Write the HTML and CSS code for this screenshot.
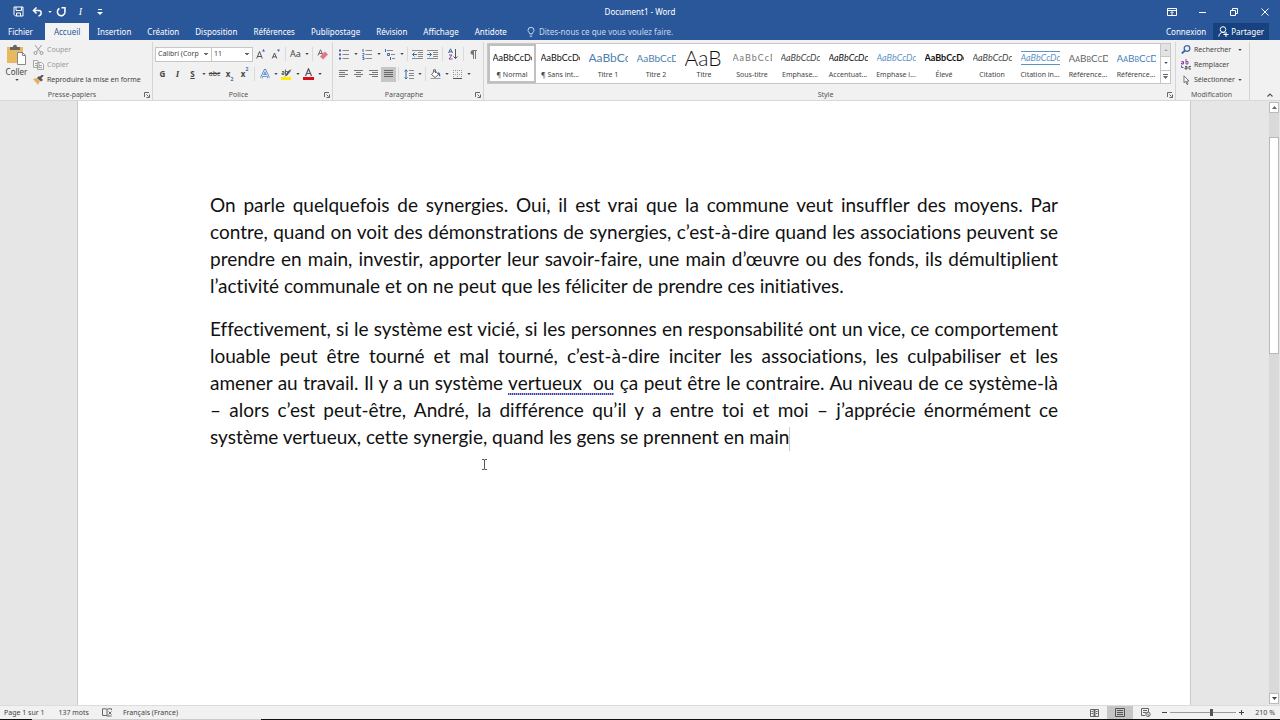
FILE: index.html
```html
<!DOCTYPE html>
<html lang="fr">
<head>
<meta charset="utf-8">
<title>Document1 - Word</title>
<link rel="stylesheet" href="styles.css">
</head>
<body>
<svg class="defs" aria-hidden="true">
  <symbol id="caret" viewBox="0 0 5 3"><path d="M0 0h5L2.500 3z" fill="currentColor"/></symbol>
  <symbol id="launch" viewBox="0 0 6 6"><path d="M.5 5V.5H5M2.500 2.500l2 2M5.500 2.500v3h-3" fill="none" stroke="#666"/></symbol>
</svg>
<header class="top">
  <div class="titlebar">
    <div class="quick">
      <button class="qbtn" aria-label="Enregistrer"><svg width="11" height="11" viewBox="0 0 11 11" fill="none" stroke="#fff"><path d="M1 1h9v9H2.500L1 8.500zM3 1v3.500h5.500V1M3.500 10V7h4v3"/></svg></button>
      <button class="qbtn" aria-label="Annuler"><svg width="11" height="10" viewBox="0 0 11 10" fill="none" stroke="#fff" stroke-width="1.500"><path d="M4.500.5L1.500 3.500l3 3M1.500 3.500H7c3 0 3 5-.5 5.500"/></svg></button>
      <button class="drop" aria-label="Options d'annulation"><svg width="4" height="2"><use href="#caret"/></svg></button>
      <button class="qbtn" aria-label="Répéter"><svg width="11" height="10" viewBox="0 0 11 10" fill="none" stroke="#fff" stroke-width="1.500"><path d="M3.500 1.500A3.800 3.800 0 1 0 8.500 3M5.500.8H9v3.500"/></svg></button>
      <button class="qbtn qitalic" aria-label="Italique">I</button>
      <button class="qbtn" aria-label="Personnaliser"><svg width="6" height="6" viewBox="0 0 6 6"><path d="M1 .5h4" stroke="#fff"/><path d="M0 3h6L3 6z" fill="#fff"/></svg></button>
    </div>
    <h1 class="doc-title">Document1 - Word</h1>
    <div class="window">
      <button aria-label="Options du ruban"><svg width="10" height="8" viewBox="0 0 10 8" fill="none" stroke="#fff"><path d="M.5.5h9v7h-9zM.5 2.500h9M5 7V4M3.500 5L5 3.500 6.500 5"/></svg></button>
      <button aria-label="Réduire"><svg width="8" height="8" viewBox="0 0 8 8" stroke="#fff"><path d="M0 4.500h7"/></svg></button>
      <button aria-label="Restaurer"><svg width="8" height="8" viewBox="0 0 8 8" fill="none" stroke="#fff"><path d="M.5 2.500h5v5h-5zM2.500 2.500v-2h5v5h-2"/></svg></button>
      <button aria-label="Fermer"><svg width="8" height="8" viewBox="0 0 8 8" stroke="#fff"><path d="M.5.5l7 7M7.500.5l-7 7"/></svg></button>
    </div>
  </div>
  <nav class="tabs">
    <button class="tab tab-file">Fichier</button>
    <button class="tab tab-on">Accueil</button>
    <button class="tab">Insertion</button>
    <button class="tab">Création</button>
    <button class="tab">Disposition</button>
    <button class="tab">Références</button>
    <button class="tab">Publipostage</button>
    <button class="tab">Révision</button>
    <button class="tab">Affichage</button>
    <button class="tab">Antidote</button>
    <button class="tell"><svg width="8" height="10" viewBox="0 0 8 10" fill="none" stroke="#c8d8ee"><path d="M2.800 7C2.800 5.500 1 5 1 3.300a3 3 0 0 1 6 0C7 5 5.200 5.500 5.200 7zM2.800 9.200h2.400"/></svg>Dites-nous ce que vous voulez faire.</button>
    <button class="signin">Connexion</button>
    <button class="share"><svg width="11" height="11" viewBox="0 0 11 11" fill="none" stroke="#fff"><circle cx="5" cy="3.500" r="2.800"/><path d="M.8 10.500c.3-3 2-4 4-4 1 0 1.800.2 2.400.7M5.500 8.500h5M8 6v5"/></svg>Partager</button>
  </nav>
</header>

<section class="ribbon" aria-label="Ruban Accueil">
  <div class="group g-clip">
    <div class="group-body clip">
      <button class="paste"><svg width="19" height="21" viewBox="0 0 19 21"><path d="M0 3h16v16H0z" fill="#e9b95f"/><path d="M3 3h3c0-3 4-3 4 0h3v3H3z" fill="#666"/><path d="M10.500 8.500h5l3 3v9h-8z" fill="#fff" stroke="#888"/><path d="M15.500 8.500v3h3" fill="none" stroke="#888"/></svg><span>Coller</span><svg width="4" height="2"><use href="#caret"/></svg></button>
      <div class="stack">
        <button class="line off"><svg width="11" height="10" viewBox="0 0 11 10" fill="none" stroke="#999"><path d="M2 0l5.500 7M8.500 0L3.500 7"/><circle cx="2.500" cy="8" r="1.500"/><circle cx="8.500" cy="8" r="1.500"/></svg>Couper</button>
        <button class="line off"><svg width="11" height="10" viewBox="0 0 11 10" fill="#f5f5f5" stroke="#a5a5a5"><path d="M.5.5h4l1.500 2v5H.5zM4.500 2.500h4l2 2v5h-6zM6 5.500h3M6 7.500h3M2 3.500h2M2 5.500h2"/></svg>Copier</button>
        <button class="line"><svg width="11" height="10" viewBox="0 0 11 10"><path d="M0 4l4-1 3 3-2 4z" fill="#e9b060"/><path d="M4 3l2-2 4 4-2 1.500z" fill="#555"/><path d="M7 3l3-3" stroke="#555" stroke-width="2"/></svg>Reproduire la mise en forme</button>
      </div>
    </div>
    <div class="group-name"><span>Presse-papiers</span><button aria-label="Options du presse-papiers"><svg width="6" height="6"><use href="#launch"/></svg></button></div>
  </div>

  <div class="group g-font">
    <div class="group-body">
      <div class="row">
        <select class="combo combo-font" aria-label="Police"><option>Calibri (Corp</option></select>
        <select class="combo combo-size" aria-label="Taille"><option>11</option></select>
        <button class="ic" aria-label="Agrandir"><svg width="10" height="10" viewBox="0 0 10 10"><path d="M.7 9.500L3.500 2.500l2.800 7M1.700 7.500h3.600" fill="none" stroke="#555"/><path d="M6 2.500L7.500 0 9 2.500z" fill="#3868a8"/></svg></button>
        <button class="ic" aria-label="Réduire la police"><svg width="10" height="10" viewBox="0 0 10 10"><path d="M1.200 9.500L3.500 4l2.300 5.500M2 7.800h3" fill="none" stroke="#555"/><path d="M6 .5h3L7.500 3z" fill="#3868a8"/></svg></button>
        <i class="sep"></i>
        <button class="ic ic-case" aria-label="Casse">Aa</button><button class="drop" aria-label="Choix de casse"><svg width="4" height="2"><use href="#caret"/></svg></button>
        <i class="sep"></i>
        <button class="ic" aria-label="Effacer la mise en forme"><svg width="11" height="11" viewBox="0 0 11 11"><path d="M1 6.500L3.500.7 5.500 5M2 4.500h3" fill="none" stroke="#666"/><path d="M3 7.500l5-5 3 3-5 5z" fill="#e2748c"/></svg></button>
      </div>
      <div class="row">
        <button class="ic b" aria-label="Gras">G</button>
        <button class="ic it" aria-label="Italique">I</button>
        <button class="ic un" aria-label="Souligné">S</button><button class="drop" aria-label="Style de soulignement"><svg width="4" height="2"><use href="#caret"/></svg></button>
        <button class="ic st" aria-label="Barré">abc</button>
        <button class="ic b" aria-label="Indice">x<sub>2</sub></button>
        <button class="ic b" aria-label="Exposant">x<sup>2</sup></button>
        <i class="sep"></i>
        <button class="ic" aria-label="Effets de texte"><svg width="10" height="10" viewBox="0 0 10 10"><path d="M1.200 9L5 1l3.800 8M2.800 6.500h4.400" fill="none" stroke="#4a7fc4" stroke-width="2.400"/><path d="M1.200 9L5 1l3.800 8M2.800 6.500h4.400" fill="none" stroke="#f4f8fd" stroke-width=".9"/></svg></button><button class="drop" aria-label="Choix des effets"><svg width="4" height="2"><use href="#caret"/></svg></button>
        <button class="ic" aria-label="Surlignage"><svg width="11" height="12" viewBox="0 0 11 12"><path d="M0 9h10v3H0z" fill="#ffee00"/><path d="M1 3.500h2v3H1V5h2M4.500 1.500v5h2v-3h-2M4 8.500L10 1.500" fill="none" stroke="#666"/><path d="M5 7.500l4-5" stroke="#555" stroke-width="2"/></svg></button><button class="drop" aria-label="Couleur de surlignage"><svg width="4" height="2"><use href="#caret"/></svg></button>
        <button class="ic" aria-label="Couleur de police"><svg width="11" height="12" viewBox="0 0 11 12"><path d="M0 9h11v3H0z" fill="#d80d18"/><path d="M2.500 8L5.500.8 8.500 8M3.500 5.500h4" fill="none" stroke="#555" stroke-width="1.200"/></svg></button><button class="drop" aria-label="Choix de couleur"><svg width="4" height="2"><use href="#caret"/></svg></button>
      </div>
    </div>
    <div class="group-name"><span>Police</span><button aria-label="Options de police"><svg width="6" height="6"><use href="#launch"/></svg></button></div>
  </div>

  <div class="group g-para">
    <div class="group-body">
      <div class="row">
        <button class="ic ic-w" aria-label="Puces"><svg width="10" height="11" viewBox="0 0 10 11"><path d="M0 1.500h2M0 5.500h2M0 9.500h2" stroke="#3868a8" stroke-width="2"/><path d="M3.500 1.500H10M3.500 5.500H10M3.500 9.500H10" stroke="#888"/></svg></button><button class="drop" aria-label="Choix de puces"><svg width="4" height="2"><use href="#caret"/></svg></button>
        <button class="ic ic-w" aria-label="Numérotation"><svg width="10" height="11" viewBox="0 0 10 11"><path d="M1 0v3M.5 4.500H2v1L.5 7H2M.5 8.500H2v2H.5" stroke="#3868a8" fill="none"/><path d="M3.500 1.500H10M3.500 5.500H10M3.500 9.500H10" stroke="#888"/></svg></button><button class="drop" aria-label="Choix de numérotation"><svg width="4" height="2"><use href="#caret"/></svg></button>
        <button class="ic ic-w" aria-label="Liste à plusieurs niveaux"><svg width="11" height="11" viewBox="0 0 11 11"><path d="M.5 0v3M2.500 4.500h2v2h-2zM5.500 8v3" stroke="#3868a8" fill="none"/><path d="M2 1.500h6M6 5.500h4M7 9.500h3" stroke="#888"/></svg></button><button class="drop" aria-label="Choix de liste"><svg width="4" height="2"><use href="#caret"/></svg></button>
        <i class="sep"></i>
        <button class="ic" aria-label="Diminuer le retrait"><svg width="11" height="9" viewBox="0 0 11 9"><path d="M0 .5h11M6 2.500h5M6 4.500h5M6 6.500h5M0 8.500h11" stroke="#888"/><path d="M.8 4.500H5M2.500 2.500l-2 2 2 2" fill="none" stroke="#3868a8"/></svg></button>
        <button class="ic" aria-label="Augmenter le retrait"><svg width="11" height="9" viewBox="0 0 11 9"><path d="M0 .5h11M6 2.500h5M6 4.500h5M6 6.500h5M0 8.500h11" stroke="#888"/><path d="M0 4.500h4.500M2.500 2.500l2 2-2 2" fill="none" stroke="#3868a8"/></svg></button>
        <i class="sep"></i>
        <button class="ic ic-w" aria-label="Trier"><svg width="10" height="12" viewBox="0 0 10 12" fill="none"><path d="M.5 5L2.500.8 4.500 5M1 3.800h3" stroke="#3868a8"/><path d="M1 7h3L1 11h3.500" stroke="#8848a0"/><path d="M7.500 1v9.500M5.500 8.500l2 2 2-2" stroke="#555"/></svg></button>
        <i class="sep"></i>
        <button class="ic" aria-label="Afficher tout"><svg width="7" height="9" viewBox="0 0 7 9"><path d="M3.500 0h3.500v1H3.500v4C-.5 5-.5 0 3.500 0z" fill="#777"/><path d="M3.500 0v9M5.500 0v9" stroke="#777"/></svg></button>
      </div>
      <div class="row">
        <button class="ic" aria-label="Aligner à gauche"><svg width="9" height="8" viewBox="0 0 9 8" stroke="#777"><path d="M0 .5h9M0 2.500h6M0 4.500h9M0 6.500h6"/></svg></button>
        <button class="ic" aria-label="Centrer"><svg width="9" height="8" viewBox="0 0 9 8" stroke="#777"><path d="M0 .5h9M2 2.500h5M0 4.500h9M2 6.500h5"/></svg></button>
        <button class="ic" aria-label="Aligner à droite"><svg width="9" height="8" viewBox="0 0 9 8" stroke="#777"><path d="M0 .5h9M3 2.500h6M0 4.500h9M3 6.500h6"/></svg></button>
        <button class="ic ic-on" aria-label="Justifier"><svg width="9" height="8" viewBox="0 0 9 8" stroke="#666"><path d="M0 .5h9M0 2.500h9M0 4.500h9M0 6.500h9"/></svg></button>
        <i class="sep"></i>
        <button class="ic" aria-label="Interligne"><svg width="10" height="11" viewBox="0 0 10 11" fill="none"><path d="M2 .8v9M.5 2.500L2 .8l1.500 1.700M.5 8.500L2 10l1.500-1.500" stroke="#3868a8"/><path d="M5 1.500h5M5 4.500h5M5 6.500h5M5 9.500h5" stroke="#888"/></svg></button><button class="drop" aria-label="Choix d'interligne"><svg width="4" height="2"><use href="#caret"/></svg></button>
        <i class="sep"></i>
        <button class="ic" aria-label="Trame de fond"><svg width="11" height="11" viewBox="0 0 11 11"><path d="M1.500 5.500l3.500-4 3.500 4L5 8.500zM3.500 3V1c0-1 2-1 2 0v3" fill="#fff" stroke="#666"/><path d="M8.500 3c2 1 2 3 1.500 5L8 5z" fill="#3868a8"/><path d="M.5 9.500h10" stroke="#999"/></svg></button><button class="drop" aria-label="Couleur de trame"><svg width="4" height="2"><use href="#caret"/></svg></button>
        <button class="ic" aria-label="Bordures"><svg width="9" height="9" viewBox="0 0 9 9"><path d="M.5 0v9M4.500 0v9M8.500 0v9M0 .5h9M0 4.500h9" stroke="#999" stroke-dasharray="1 1"/><path d="M0 8.500h9" stroke="#555"/></svg></button><button class="drop" aria-label="Choix de bordures"><svg width="4" height="2"><use href="#caret"/></svg></button>
      </div>
    </div>
    <div class="group-name"><span>Paragraphe</span><button aria-label="Options de paragraphe"><svg width="6" height="6"><use href="#launch"/></svg></button></div>
  </div>

  <div class="group g-style">
    <div class="group-body">
      <div class="gallery">
        <button class="style style-on"><span class="sample">AaBbCcDc</span><span>¶ Normal</span></button>
        <button class="style"><span class="sample">AaBbCcDc</span><span>¶ Sans int...</span></button>
        <button class="style"><span class="sample s-h1">AaBbCc</span><span>Titre 1</span></button>
        <button class="style"><span class="sample s-h2">AaBbCcD</span><span>Titre 2</span></button>
        <button class="style"><span class="sample s-title">AaB</span><span>Titre</span></button>
        <button class="style"><span class="sample s-sub">AaBbCcD</span><span>Sous-titre</span></button>
        <button class="style"><span class="sample s-em">AaBbCcDc</span><span>Emphase...</span></button>
        <button class="style"><span class="sample s-acc">AaBbCcDc</span><span>Accentuat...</span></button>
        <button class="style"><span class="sample s-emi">AaBbCcDc</span><span>Emphase i...</span></button>
        <button class="style"><span class="sample s-strong">AaBbCcDc</span><span>Élevé</span></button>
        <button class="style"><span class="sample s-em">AaBbCcDc</span><span>Citation</span></button>
        <button class="style"><span class="sample s-emi s-lines">AaBbCcDc</span><span>Citation in...</span></button>
        <button class="style"><span class="sample s-caps">AaBbCcDd</span><span>Référence...</span></button>
        <button class="style"><span class="sample s-caps s-capsb">AaBbCcDd</span><span>Référence...</span></button>
        <div class="gal-nav">
          <button class="gal-off" aria-label="Styles précédents"><svg width="4" height="2" viewBox="0 0 4 2"><path d="M0 2h4L2 0z" fill="#aaa"/></svg></button>
          <button aria-label="Styles suivants"><svg width="4" height="2"><use href="#caret"/></svg></button>
          <button aria-label="Tous les styles"><svg width="5" height="5" viewBox="0 0 5 5"><path d="M0 .5h5" stroke="#666"/><path d="M0 2h5L2.500 5z" fill="#666"/></svg></button>
        </div>
      </div>
    </div>
    <div class="group-name"><span>Style</span><button aria-label="Options de style"><svg width="6" height="6"><use href="#launch"/></svg></button></div>
  </div>

  <div class="group g-edit">
    <div class="group-body stack">
      <button class="line"><svg width="10" height="9" viewBox="0 0 10 9" fill="none" stroke="#3868a8"><circle cx="6" cy="3.500" r="2.800" stroke-width="1.300"/><path d="M4 5.500L.8 8.500" stroke-width="1.800"/></svg>Rechercher<svg class="after" width="4" height="2"><use href="#caret"/></svg></button>
      <button class="line"><svg width="10" height="11" viewBox="0 0 10 11" fill="none"><path d="M.5 2.500h2v2.500h-2V4h2M5 0v5h2V2.500H5" stroke="#8848a0"/><path d="M4 7.500h2v2.500H4V9h2M10 7.500H8v2.500h2" stroke="#555"/><path d="M.5 6.500v2h2" stroke="#3868a8"/></svg>Remplacer</button>
      <button class="line"><svg width="10" height="10" viewBox="0 0 10 10"><path d="M3 .8v7l1.700-1.500L6 9.500l1-.5-1.300-3H8z" fill="#fff" stroke="#666" stroke-width=".9"/></svg>Sélectionner<svg width="4" height="2"><use href="#caret"/></svg></button>
    </div>
    <div class="group-name"><span>Modification</span></div>
  </div>
  <div class="g-end"><button aria-label="Réduire le ruban"><svg width="6" height="4" viewBox="0 0 6 4"><path d="M.5 3.500L3 1l2.500 2.500" fill="none" stroke="#555" stroke-width="1.200"/></svg></button></div>
</section>

<main class="work">
  <article class="page">
    <p><span>On parle quelquefois de synergies. Oui, il est vrai que la commune veut insuffler des moyens. Par</span>
    <span>contre, quand on voit des démonstrations de synergies, c’est-à-dire quand les associations peuvent se</span>
    <span>prendre en main, investir, apporter leur savoir-faire, une main d’œuvre ou des fonds, ils démultiplient</span>
    <span class="last">l’activité communale et on ne peut que les féliciter de prendre ces initiatives.</span></p>
    <p><span>Effectivement, si le système est vicié, si les personnes en responsabilité ont un vice, ce comportement</span>
    <span>louable peut être tourné et mal tourné, c’est-à-dire inciter les associations, les culpabiliser et les</span>
    <span>amener au travail. Il y a un système <u>vertueux&nbsp; ou</u> ça peut être le contraire. Au niveau de ce système-là</span>
    <span>– alors c’est peut-être, André, la différence qu’il y a entre toi et moi – j’apprécie énormément ce</span>
    <span class="last caret">système vertueux, cette synergie, quand les gens se prennent en main</span></p>
    <svg class="pointer" width="7" height="11" viewBox="0 0 7 11" fill="none" stroke="#555"><path d="M1 .5h2l.5.5.500-.5h2M3.500 1v9M1 10.500h2l.5-.5.500.5h2"/></svg>
  </article>
  <div class="scroll">
    <button aria-label="Défiler vers le haut"><svg width="5" height="3" viewBox="0 0 5 3"><path d="M0 3h5L2.500 0z" fill="#666"/></svg></button>
    <div class="thumb"></div>
    <button class="down" aria-label="Défiler vers le bas"><svg width="5" height="3"><use href="#caret"/></svg></button>
  </div>
</main>

<footer class="status">
  <span class="st-page">Page 1 sur 1</span>
  <span class="st-words">137 mots</span>
  <svg width="10" height="9" viewBox="0 0 10 9" fill="none" stroke="#666"><path d="M.5.8h3.500L5 1.500V8l-1-.5H.5zM5 1.500L6 .8h3.500V2M5 8h4.500M6.500 3.500l3 3M9.500 3.500l-3 3"/></svg>
  <span class="st-lang">Français (France)</span>
  <div class="views">
    <button aria-label="Mode Lecture"><svg width="9" height="8" viewBox="0 0 9 8" fill="none" stroke="#666"><path d="M.5.5H4v7H.5zM5 .5h3.500v7H5zM1.500 2.500H3M1.500 4.500H3M6 2.500h1.500M6 4.500h1.500M4.500 0v8"/></svg></button>
    <button class="view-on" aria-label="Page"><svg width="10" height="9" viewBox="0 0 10 9" fill="none" stroke="#555"><path d="M.5.5h9v8h-9zM2 2.500h6M2 4.500h6M2 6.500h6"/></svg></button>
    <button aria-label="Mode Web"><svg width="10" height="9" viewBox="0 0 10 9" fill="none" stroke="#666"><path d="M4 7.500H.5v-7h7V4M2 2.500h4M2 4.500h3"/><circle cx="7" cy="6.300" r="2.200"/><path d="M5.500 5l3 3"/></svg></button>
  </div>
  <button class="zoom-step" aria-label="Zoom arrière"><svg width="5" height="5" viewBox="0 0 5 5"><path d="M0 2.500h5" stroke="#444"/></svg></button>
  <input class="zoom" type="range" min="0" max="100" value="64" aria-label="Zoom">
  <button class="zoom-step" aria-label="Zoom avant"><svg width="5" height="5" viewBox="0 0 5 5"><path d="M0 2.500h5M2.500 0v5" stroke="#444"/></svg></button>
  <span class="st-zoom">210 %</span>
</footer>
</body>
</html>
```
FILE: styles.css
```css
* { box-sizing: border-box; }
html, body { height: 100%; }
body {
  margin: 0;
  display: flex;
  flex-direction: column;
  overflow: hidden;
  background: #e6e6e6;
  color: #444;
  font: 8px/10px "Noto Sans", "Open Sans", sans-serif;
}
button {
  margin: 0;
  padding: 0;
  border: 0;
  background: none;
  color: inherit;
  font: inherit;
  white-space: nowrap;
}
svg { display: block; flex: none; }
.defs { position: absolute; width: 0; height: 0; }

/* Title bar and tabs */
.top { background: #2a579a; color: #fff; }
.titlebar { display: grid; grid-template-columns: 1fr auto 1fr; align-items: center; height: 23px; }
.quick { display: flex; align-items: center; height: 20px; padding-left: 9px; }
.qbtn { display: flex; align-items: center; justify-content: center; width: 19px; height: 20px; }
.quick .drop { width: 5px; }
.qitalic { font: italic 10px/12px "Liberation Serif", serif; }
.doc-title { margin: 0; font-size: 8px; font-weight: 400; }
.window { display: flex; justify-content: flex-end; height: 20px; }
.window button { display: flex; align-items: center; justify-content: center; width: 31px; height: 20px; }
.tabs { display: flex; height: 17px; }
.tab { padding: 0 8px; }
.tab-file { padding: 0 12px 0 8px; }
.tab-on { padding: 0 9px; background: #f3f3f3; color: #2a579a; }
.tell { display: flex; align-items: center; gap: 4px; margin-left: 12px; color: #c8d8ee; }
.signin { margin-left: auto; padding: 0 7px; }
.share { display: flex; align-items: center; gap: 2px; margin-right: 11px; padding: 0 5px; background: #17427f; }

/* Ribbon */
.ribbon {
  display: flex;
  height: 61px;
  flex: none;
  background: #f1f1f1;
  border-bottom: 1px solid #d8d8d8;
  font-size: 7px;
}
.group { display: flex; flex-direction: column; flex: none; margin-top: 2px; border-right: 1px solid #d5d5d5; }
.g-clip { width: 153px; }
.g-font { width: 180px; }
.g-para { width: 151px; }
.g-style { flex: 1; min-width: 0; }
.g-edit { width: 74px; }
.g-end { display: flex; align-items: flex-end; justify-content: flex-end; width: 30px; padding: 0 7px 3px 0; }
.group-body { flex: 1; padding: 2px 2px 0; }
.g-para .group-body { padding-left: 3px; }
.group-name { display: flex; align-items: center; height: 11px; padding-right: 2px; color: #555; }
.group-name span { flex: 1; text-align: center; }
.clip { display: flex; padding: 0; }
.paste { display: flex; flex-direction: column; align-items: center; width: 33px; padding-top: 2px; gap: 2px; font-size: 8px; }
.group-body.stack { padding: 0; }
.line { display: flex; align-items: center; gap: 3px; height: 15px; }
.line .after { margin-left: 4px; }
.off { color: #999; }
.g-edit .line { padding-left: 5px; }
.row { display: flex; align-items: center; height: 20px; }
.ic { display: flex; align-items: center; justify-content: center; width: 15px; height: 15px; flex: none; font-size: 8px; }
.ic-w { width: 16px; }
.ic-on { background: #c6c6c6; }
.drop { display: flex; align-items: center; justify-content: center; width: 7px; height: 15px; flex: none; }
.sep { width: 1px; height: 14px; margin: 0 2px; background: #dadada; }
.ic-case { font-size: 9px; }
.b { font-weight: 700; }
.b sub, .b sup { font-size: 5px; line-height: 5px; color: #3868a8; }
.b sub { align-self: flex-end; }
.b sup { align-self: flex-start; }
.it { font: italic bold 9px/10px "Liberation Serif", serif; }
.un { font-weight: 700; text-decoration: underline; }
.st { font-size: 7px; text-decoration: line-through; }
.combo {
  flex: none;
  height: 15px;
  margin: 0;
  padding: 0 8px 0 2px;
  border: 1px solid #c6c6c6;
  border-radius: 0;
  appearance: none;
  background:
    linear-gradient(45deg, transparent 50%, #666 50%) right 5px center / 2px 2px no-repeat,
    linear-gradient(-45deg, transparent 50%, #666 50%) right 3px center / 2px 2px no-repeat,
    #fff;
  color: #444;
  font: inherit;
}
.combo-font { width: 57px; }
.combo-size { width: 41px; border-left: 0; }

/* Style gallery */
.g-style .group-body { padding: 1px 4px 0 3px; }
.gallery { display: flex; height: 41px; background: #fff; border: 1px solid #c6c6c6; }
.style { display: flex; flex-direction: column; align-items: center; justify-content: flex-end; flex: 1 1 48px; min-width: 0; padding-bottom: 3px; }
.style-on { padding-bottom: 1px; border: 2px solid #c0c0c0; }
.sample {
  display: flex;
  align-items: center;
  width: 39px;
  height: 20px;
  margin-bottom: 2px;
  overflow: hidden;
  color: #111;
  font: 9px/12px Lato, sans-serif;
}
.s-h1 { color: #4c7fae; font-size: 12px; }
.s-h2 { color: #4c7fae; font-size: 10px; }
.s-title { font-size: 21px; font-weight: 300; }
.s-sub { color: #777; letter-spacing: 1px; }
.s-em { color: #444; font-style: italic; }
.s-acc { font-style: italic; }
.s-emi { color: #5b93c9; font-style: italic; }
.s-strong { font-weight: 700; }
.s-lines { height: 14px; margin-bottom: 5px; border: solid #5b93c9; border-width: 1px 0; }
.s-caps { color: #666; font-size: 10px; font-variant: small-caps; }
.s-capsb { color: #3f7fbe; }
.gal-nav { display: flex; flex-direction: column; width: 10px; border-left: 1px solid #c6c6c6; }
.gal-nav button { display: flex; align-items: center; justify-content: center; flex: 1; border-bottom: 1px solid #c6c6c6; }
.gal-nav button:last-child { border-bottom: 0; }
.gal-nav .gal-off { background: #e3e3e3; }

/* Document */
.work { display: flex; flex: 1; min-height: 0; }
.page {
  position: relative;
  flex: 1;
  min-width: 0;
  margin: 0 78px 0 77px;
  padding: 90px 132px 0 132px;
  background: #fff;
  border: solid #c9c9c9;
  border-width: 0 1px;
  color: #111;
  font: 19px/27px Lato, sans-serif;
  font-variant-ligatures: none;
}
.page p { margin: 0 0 16px; }
.page p span { display: block; white-space: nowrap; text-align: justify; text-align-last: justify; }
.page p .last { text-align-last: left; }
.page p .caret::after { content: ""; display: inline-block; width: 1px; height: 24px; background: #ccc; vertical-align: middle; }
.page u {
  padding-bottom: 1px;
  text-decoration: none;
  background: repeating-linear-gradient(90deg, #4040b0 0 1px, #a8a8e0 1px 2px) bottom / 100% 2px no-repeat;
}
.pointer { position: absolute; left: 403px; top: 358px; }
.scroll { display: flex; flex-direction: column; flex: none; width: 10px; margin: 1px 1px 1px 0; background: #d9d9d9; }
.scroll button { display: flex; align-items: center; justify-content: center; height: 11px; background: #fff; border: 1px solid #bbb; }
.thumb { height: 36%; margin-top: 24px; background: #fff; border: 1px solid #b8b8b8; }
.scroll .down { margin-top: auto; }

/* Status bar */
.status {
  display: flex;
  align-items: center;
  height: 15px;
  flex: none;
  padding: 0 5px 1px 4px;
  border-top: 1px solid #dcdcdc;
  background: linear-gradient(90deg, #111 32px, #ccc 32px 261px, #111 261px) bottom / 100% 1px no-repeat #f1f1f1;
  font-size: 7px;
}
.st-words { margin: 0 13px 0 14px; }
.st-lang { margin-left: 11px; }
.views { display: flex; margin-left: auto; }
.views button { display: flex; align-items: center; justify-content: center; width: 26px; height: 13px; }
.views .view-on { background: #c6c6c6; }
.zoom-step { margin: 0 3px; }
.zoom { width: 66px; height: 9px; margin: 0; appearance: none; background: linear-gradient(#999, #999) center / 100% 1px no-repeat; }
.zoom::-webkit-slider-thumb { appearance: none; width: 3px; height: 7px; background: #555; }
.st-zoom { width: 20px; margin-left: 8px; text-align: right; white-space: nowrap; }
```
